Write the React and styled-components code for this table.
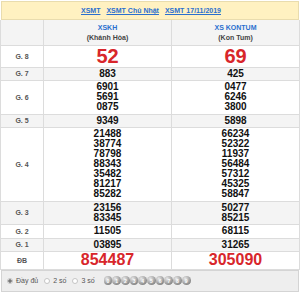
import styled, { createGlobalStyle } from "styled-components";

const rows = [
  { label: "G. 8", a: ["52"], b: ["69"], big: 20, shade: false },
  { label: "G. 7", a: ["883"], b: ["425"], shade: true },
  { label: "G. 6", a: ["6901", "5691", "0875"], b: ["0477", "6246", "3800"], shade: false },
  { label: "G. 5", a: ["9349"], b: ["5898"], shade: true },
  {
    label: "G. 4",
    a: ["21488", "38774", "78798", "88343", "35482", "81217", "85282"],
    b: ["66234", "52322", "11937", "56484", "57312", "45325", "58847"],
    shade: false,
  },
  { label: "G. 3", a: ["23156", "83345"], b: ["50277", "85215"], shade: true },
  { label: "G. 2", a: ["11505"], b: ["68115"], shade: false },
  { label: "G. 1", a: ["03895"], b: ["31265"], shade: true },
  { label: "ĐB", a: ["854487"], b: ["305090"], big: 16, shade: false },
];

export default function App() {
  return (
    <Page>
      <GlobalStyle />
      <TitleBar>
        <TitleLink>XSMT</TitleLink>
        <TitleLink>XSMT Chủ Nhật</TitleLink>
        <TitleLink>XSMT 17/11/2019</TitleLink>
      </TitleBar>

      <Table>
        <Row $shade>
          <Label />
          <HeadCell>
            <Province>XSKH</Province>
            <Region>(Khánh Hòa)</Region>
          </HeadCell>
          <HeadCell>
            <Province>XS KONTUM</Province>
            <Region>(Kon Tum)</Region>
          </HeadCell>
        </Row>
        {rows.map(r => (
          <Row key={r.label} $shade={r.shade}>
            <Label>{r.label}</Label>
            <Cell>
              {r.a.map(n => r.big ? <Big key={n} $size={r.big}>{n}</Big> : <Num key={n}>{n}</Num>)}
            </Cell>
            <Cell>
              {r.b.map(n => r.big ? <Big key={n} $size={r.big}>{n}</Big> : <Num key={n}>{n}</Num>)}
            </Cell>
          </Row>
        ))}
      </Table>

      <Footer>
        <Option>
          <Radio $checked />
          Đầy đủ
        </Option>
        <Option>
          <Radio />
          2 số
        </Option>
        <Option>
          <Radio />
          3 số
        </Option>
        <Balls>
          {[0, 1, 2, 3, 4, 5, 6, 7, 8, 9].map(d => <Ball key={d}>{d}</Ball>)}
        </Balls>
      </Footer>
    </Page>
  );
}

const GlobalStyle = createGlobalStyle`
  body {
    margin: 0;
    background: #fff;
    font-family: "Liberation Sans", Arial, sans-serif;
  }
`
const Page = styled.div`
  width: 300px;
  height: 293px;
  display: flex;
  flex-direction: column;
  overflow: hidden;
`
const TitleBar = styled.div`
  height: 17px;
  margin: 1px 1px 0 1px;
  background: #fff1c1;
  border: 1px solid #e9dcae;
  display: flex;
  align-items: center;
  justify-content: center;
  gap: 6px;
  padding-left: 2px;
`
const TitleLink = styled.a`
  font-size: 7px;
  font-weight: 700;
  color: #2a6fcf;
  text-decoration: underline;
`
const Table = styled.div`
  border-left: 1px solid #dcdcdc;
  border-right: 1px solid #dcdcdc;
  display: flex;
  flex-direction: column;
`
const Row = styled.div`
  display: grid;
  grid-template-columns: 43px 128px 1fr;
  background: ${p => (p.$shade ? "#f4f4f4" : "#fff")};
  border-bottom: 1px solid #dcdcdc;
`
const Label = styled.div`
  display: flex;
  align-items: center;
  justify-content: center;
  font-size: 7px;
  font-weight: 700;
  color: #555;
  border-right: 1px solid #dcdcdc;
`
const Cell = styled.div`
  display: flex;
  flex-direction: column;
  align-items: center;
  justify-content: center;
  padding: 1.25px 0;
  &:nth-child(2) {
    border-right: 1px solid #dcdcdc;
  }
`
const HeadCell = styled(Cell)`
  height: 25px;
  gap: 3px;
  padding: 0;
`
const Province = styled.div`
  font-size: 7px;
  font-weight: 700;
  color: #2a6fcf;
`
const Region = styled.div`
  font-size: 7px;
  font-weight: 700;
  color: #444;
`
const Num = styled.div`
  font-size: 10px;
  line-height: 10px;
  font-weight: 700;
  color: #111;
`
const Big = styled.div`
  font-size: ${p => p.$size}px;
  line-height: ${p => p.$size - 2}px;
  font-weight: 700;
  color: #d8262b;
`
const Footer = styled.div`
  flex: 1;
  margin: 0 1px 1px 1px;
  background: #eeeeee;
  border: 1px solid #d4d4d4;
  display: flex;
  align-items: center;
  padding-left: 5px;
  gap: 6px;
`
const Option = styled.label`
  display: flex;
  align-items: center;
  gap: 3px;
  font-size: 7px;
  color: #555;
`
const Radio = styled.span`
  width: 6px;
  height: 6px;
  border-radius: 50%;
  border: 1px solid #c4c4c4;
  background: ${p => (p.$checked ? "radial-gradient(circle, #777 0 1.5px, #fff 2px)" : "#fff")};
  box-sizing: border-box;
`
const Balls = styled.div`
  display: flex;
  margin-left: 3px;
`
const Ball = styled.span`
  width: 8.7px;
  height: 8.7px;
  border-radius: 50%;
  background: radial-gradient(circle at 35% 30%, #e8e8e8, #8d8d8d 70%, #6a6a6a);
  color: #fff;
  font-size: 5px;
  font-weight: 700;
  display: flex;
  align-items: center;
  justify-content: center;
`
